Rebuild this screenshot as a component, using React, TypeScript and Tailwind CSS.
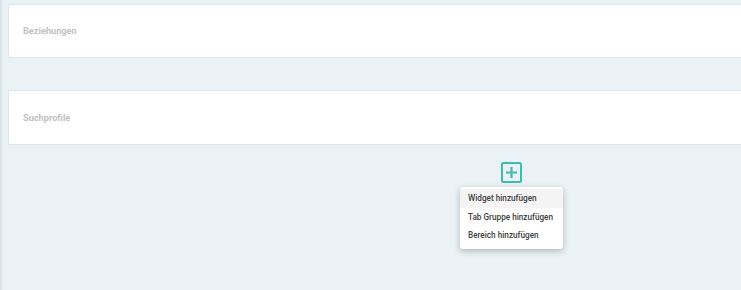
const panels = ["Beziehungen", "Suchprofile"];

const menuItems = ["Widget hinzufügen", "Tab Gruppe hinzufügen", "Bereich hinzufügen"];

export default function App() {
  return (
    <main className="flex h-[290px] w-[741px] overflow-hidden bg-[#eaf2f5] font-['Roboto',sans-serif]">
      <div className="w-[2px] shrink-0 bg-[#dbe6eb]" />
      <div className="flex flex-1 flex-col pl-[6px] pt-[4px]">
        <section className="flex h-[54px] items-center border border-r-0 border-[#dde8ee] bg-white pl-[14px]">
          <h2 className="text-[9.2px] font-bold text-[#c2c2c2]">{panels[0]}</h2>
        </section>
        <section className="mt-[32px] flex h-[55px] items-center border border-r-0 border-[#dde8ee] bg-white pl-[14px]">
          <h2 className="text-[9.2px] font-bold text-[#c2c2c2]">{panels[1]}</h2>
        </section>

        <div className="mt-[16px] ml-[492px] flex h-[22px] w-[22px] items-center justify-center">
          <svg width="21" height="21" viewBox="0 0 21 21" fill="none">
            <rect x="1" y="1" width="19" height="19" rx="1.5" stroke="#3fbcac" strokeWidth="2" />
            <path d="M10.5 5v11M5 10.5h11" stroke="#3fbcac" strokeWidth="2.2" />
          </svg>
        </div>

        <div className="ml-[452px] mt-[4px] w-[103px] rounded-[3px] bg-white pt-[2px] pb-[4px] shadow-[0_2px_6px_rgba(0,0,0,0.25)]">
          {menuItems.map((item, i) => (
            <div
              key={item}
              className={`flex h-[18.5px] items-center pl-[8px] text-[8.2px] font-medium text-[#404040] ${
                i === 0 ? "bg-[#f4f4f4]" : ""
              }`}
            >
              {item}
            </div>
          ))}
        </div>
      </div>
    </main>
  );
}
